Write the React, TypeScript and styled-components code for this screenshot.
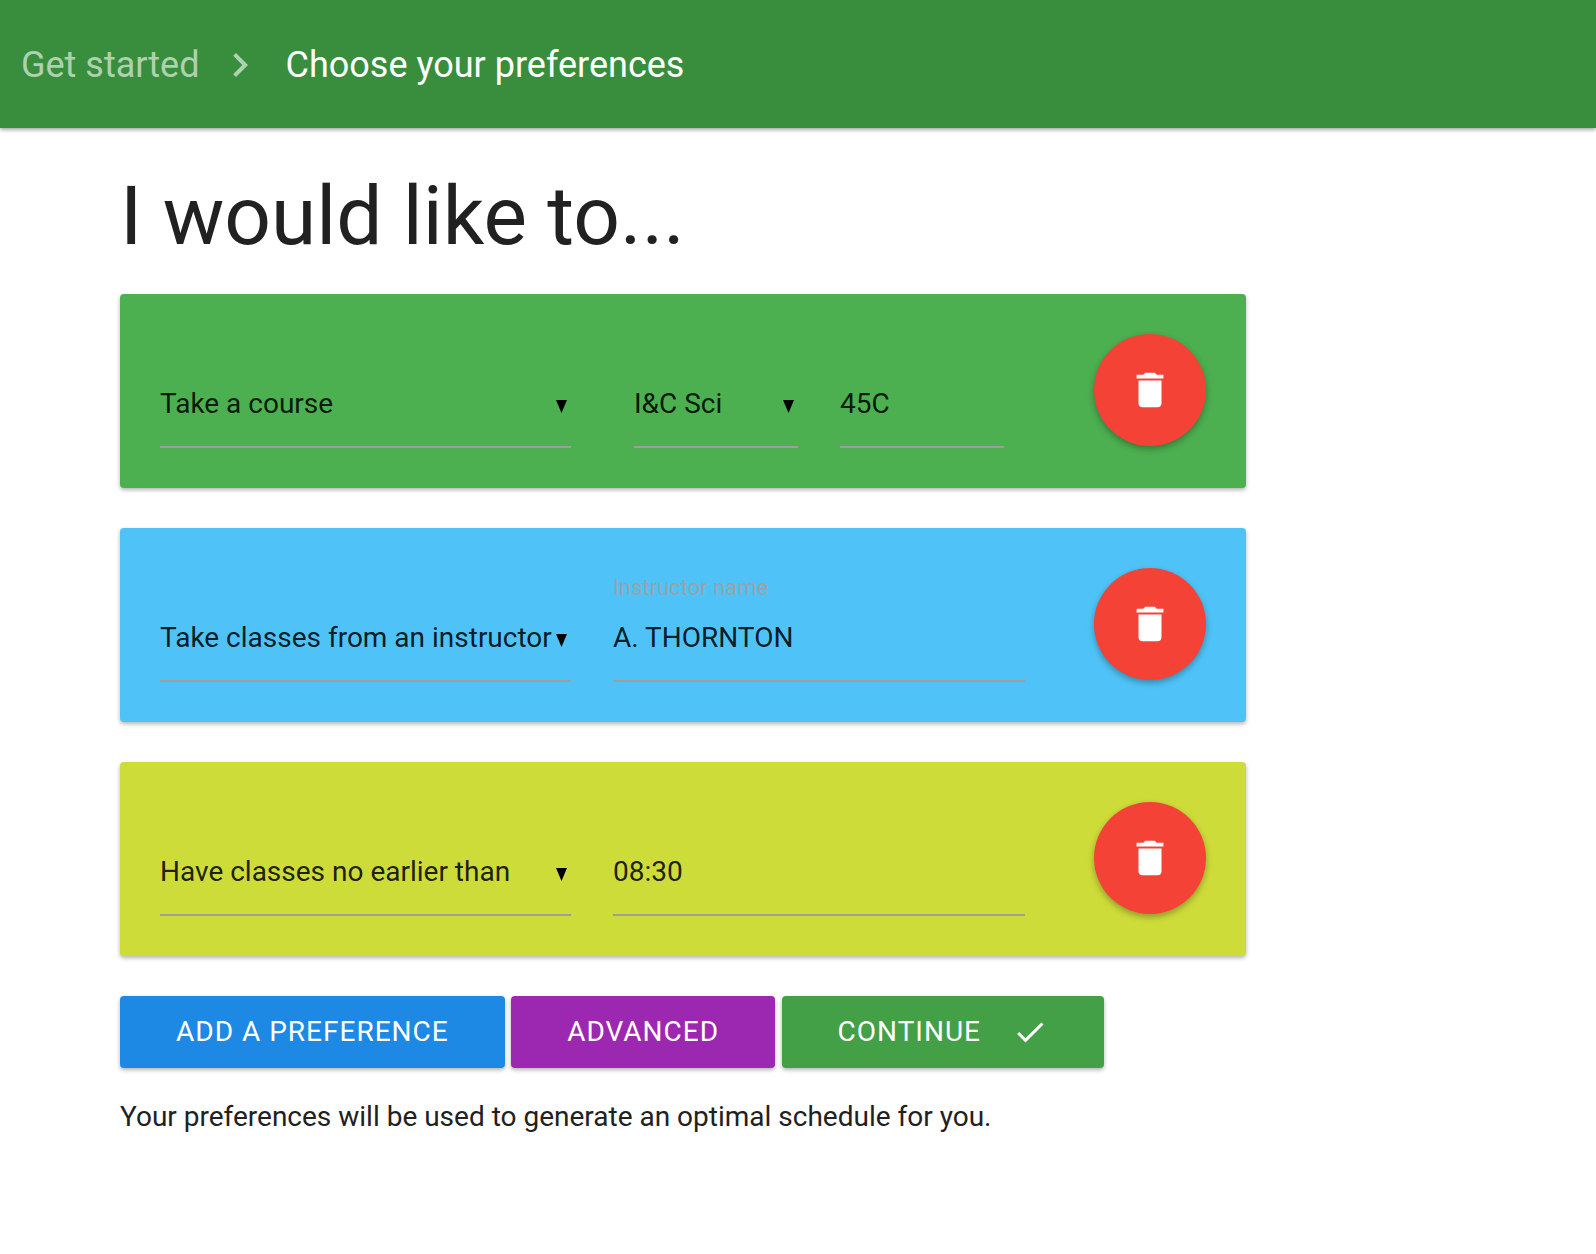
import React from "react";
import styled, { createGlobalStyle } from "styled-components";

const Global = createGlobalStyle`
  html, body { margin: 0; padding: 0; background: #fff; }
  body { font-family: Roboto, "Liberation Sans", sans-serif; color: rgba(0,0,0,.87); }
`;

const Header = styled.header`
  height: 128px;
  background: #388e3c;
  display: flex;
  align-items: center;
  padding: 1px 0 0 21px;
  box-sizing: border-box;
  box-shadow: 0 2px 4px rgba(0,0,0,.35);
  font-size: 36px;
  color: #fff;
`;
const Crumb = styled.span<{ $muted?: boolean }>`
  color: ${p => (p.$muted ? "rgba(255,255,255,.6)" : "#fff")};
`;
const Chevron = styled.svg`
  width: 48px;
  height: 48px;
  margin: 0 22px 0 16px;
  fill: rgba(255,255,255,.6);
`;
const Main = styled.main`
  padding: 0 120px;
  width: 1126px;
`;
const Title = styled.h1`
  margin: 0;
  height: 166px;
  line-height: 177px;
  font-size: 82px;
  font-weight: 400;
  color: #212121;
`;
const Card = styled.section<{ $bg: string }>`
  height: 114px;
  padding: 40px;
  margin-bottom: 40px;
  background: ${p => p.$bg};
  border-radius: 4px;
  display: flex;
  justify-content: space-between;
  box-shadow: 0 2px 4px rgba(0,0,0,.3);
`;
const Fields = styled.div`
  display: flex;
  align-items: flex-end;
`;
const Field = styled.div<{ $width: number; $gap?: number }>`
  width: ${p => p.$width}px;
  margin-left: ${p => p.$gap ?? 0}px;
  display: flex;
  flex-direction: column;
`;
const Label = styled.label`
  font-size: 22px;
  line-height: 24px;
  margin-bottom: 20px;
  color: rgba(160,160,165,.95);
`;
const Value = styled.div`
  height: 60px;
  line-height: 36px;
  font-size: 28px;
  display: flex;
  justify-content: space-between;
  border-bottom: 2px solid #9e9e9e;
  white-space: nowrap;
`;
const Caret = styled.svg`
  width: 11px;
  height: 13px;
  margin: 14px 4px 0 0;
  fill: #000;
  flex: none;
`;
const Fab = styled.button`
  width: 112px;
  height: 112px;
  padding: 0;
  border: 0;
  border-radius: 50%;
  background: #f44336;
  display: flex;
  align-items: center;
  justify-content: center;
  box-shadow: 0 3px 6px rgba(0,0,0,.3);
  svg { width: 46px; height: 46px; fill: #fff; }
`;
const Actions = styled.div`
  display: flex;
  gap: 6.5px;
`;
const Action = styled.button<{ $bg: string }>`
  height: 72px;
  padding: 0 56px 2px;
  border: 0;
  border-radius: 4px;
  background: ${p => p.$bg};
  color: #fff;
  font: 400 28px Roboto, sans-serif;
  letter-spacing: 1px;
  display: flex;
  align-items: center;
  box-shadow: 0 2px 4px rgba(0,0,0,.3);
`;
const CheckIcon = styled.svg`
  width: 36px;
  height: 36px;
  margin: 2px 0 0 31px;
  fill: #fff;
`;
const Note = styled.p`
  margin: 31px 0 0;
  font-size: 28px;
  line-height: 36px;
  color: #212121;
`;

const Down = () => (
  <Caret viewBox="0 0 11 13"><path d="M0 0h11L5.5 13z" /></Caret>
);
const Trash = () => (
  <Fab aria-label="delete">
    <svg viewBox="0 0 24 24"><path d="M6 19c0 1.1.9 2 2 2h8c1.1 0 2-.9 2-2V7H6v12zM19 4h-3.5l-1-1h-5l-1 1H5v2h14V4z" /></svg>
  </Fab>
);

export default function App() {
  return (
    <>
      <Global />
      <Header>
        <Crumb $muted>Get started</Crumb>
        <Chevron viewBox="0 0 24 24"><path d="M10 6L8.59 7.41 13.17 12l-4.58 4.59L10 18l6-6z" /></Chevron>
        <Crumb>Choose your preferences</Crumb>
      </Header>
      <Main>
        <Title>I would like to...</Title>
        <Card $bg="#4caf50">
          <Fields>
            <Field $width={411}><Value>Take a course<Down /></Value></Field>
            <Field $width={164} $gap={63}><Value>I&amp;C Sci<Down /></Value></Field>
            <Field $width={164} $gap={42}><Value>45C</Value></Field>
          </Fields>
          <Trash />
        </Card>
        <Card $bg="#4fc3f7">
          <Fields>
            <Field $width={411}><Value>Take classes from an instructor<Down /></Value></Field>
            <Field $width={412} $gap={42}>
              <Label>Instructor name</Label>
              <Value>A. THORNTON</Value>
            </Field>
          </Fields>
          <Trash />
        </Card>
        <Card $bg="#cddc39">
          <Fields>
            <Field $width={411}><Value>Have classes no earlier than<Down /></Value></Field>
            <Field $width={412} $gap={42}><Value>08:30</Value></Field>
          </Fields>
          <Trash />
        </Card>
        <Actions>
          <Action $bg="#1e88e5">ADD A PREFERENCE</Action>
          <Action $bg="#9c27b0">ADVANCED</Action>
          <Action $bg="#43a047">CONTINUE
            <CheckIcon viewBox="0 0 24 24"><path d="M9 16.17L4.83 12l-1.42 1.41L9 19 21 7l-1.41-1.41z" /></CheckIcon>
          </Action>
        </Actions>
        <Note>Your preferences will be used to generate an optimal schedule for you.</Note>
      </Main>
    </>
  );
}
